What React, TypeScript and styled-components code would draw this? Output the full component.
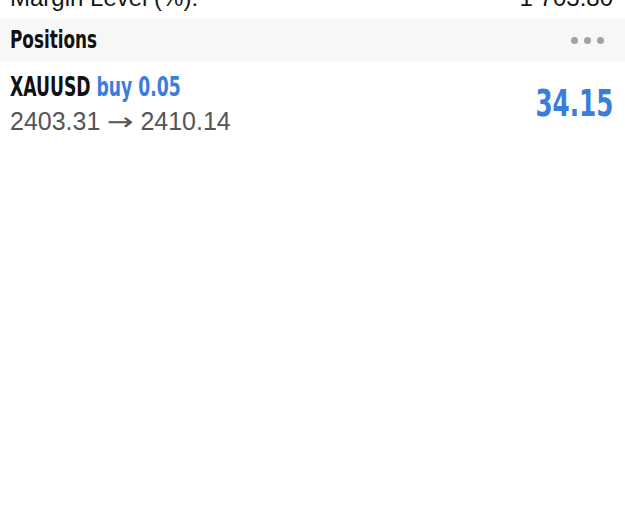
import React from "react";
import styled, { createGlobalStyle } from "styled-components";

const GlobalStyle = createGlobalStyle`
  html, body {
    margin: 0;
    padding: 0;
    background: #ffffff;
  }
  body {
    font-family: "Liberation Sans", Arial, sans-serif;
    color: #111111;
  }
`;

const Page = styled.div`
  width: 625px;
  min-height: 509px;
  background: #ffffff;
`;

const SummaryRow = styled.div`
  height: 19px;
  overflow: hidden;
  display: flex;
  justify-content: space-between;
  padding: 0 12px 0 10px;
  font-size: 24px;
  line-height: 24px;
  color: #151515;

  span {
    margin-top: -14px;
  }
`;

const SectionHeader = styled.div`
  height: 42px;
  background: #f7f7f7;
  display: flex;
  align-items: center;
  justify-content: space-between;
  padding: 0 21px 0 10px;
`;

/* condensed bold face, squeezed horizontally like the iOS condensed font */
const Condensed = styled.span`
  display: inline-block;
  font-family: "DejaVu Sans Condensed", "DejaVu Sans", sans-serif;
  font-weight: 700;
  transform: scaleX(0.76);
  transform-origin: left center;
  white-space: nowrap;
`;

const SectionTitle = styled(Condensed)`
  font-size: 24px;
  line-height: 28px;
  color: #111111;
  transform: scaleX(0.78);
`;

const MoreDots = styled.div`
  display: flex;
  gap: 6px;

  span {
    width: 7px;
    height: 7px;
    border-radius: 50%;
    background: #a2a2a2;
  }
`;

const PositionRow = styled.div`
  height: 86px;
  display: flex;
  align-items: center;
  justify-content: space-between;
  padding: 0 12px 0 10px;
`;

const PositionInfo = styled.div`
  display: flex;
  flex-direction: column;
  gap: 6px;
`;

const Symbol = styled(Condensed)`
  font-size: 26px;
  line-height: 28px;
  color: #111111;
  transform: scaleX(0.735);
`;

const Side = styled.span`
  color: #3b7ddb;
`;

const Prices = styled.div`
  font-size: 25px;
  line-height: 28px;
  color: #555555;
  white-space: nowrap;
`;

const Arrow = styled.span`
  display: inline-block;
  margin: 0 3px;
  font-family: "DejaVu Sans", sans-serif;
  font-size: 24px;
  transform: scaleX(1.33);
`;

const Profit = styled(Condensed)<{ $positive: boolean }>`
  font-size: 37px;
  line-height: 40px;
  transform: scaleX(0.74);
  transform-origin: right center;
  color: ${(p) => (p.$positive ? "#3b7ddb" : "#d64541")};
`;

export default function App() {
  return (
    <Page>
      <GlobalStyle />
      <SummaryRow>
        <span>Margin Level (%):</span>
        <span>1 703.80</span>
      </SummaryRow>
      <SectionHeader>
        <SectionTitle>Positions</SectionTitle>
        <MoreDots>
          <span />
          <span />
          <span />
        </MoreDots>
      </SectionHeader>
      <PositionRow>
        <PositionInfo>
          <div>
            <Symbol>
              XAUUSD <Side>buy 0.05</Side>
            </Symbol>
          </div>
          <Prices>
            2403.31 <Arrow>→</Arrow> 2410.14
          </Prices>
        </PositionInfo>
        <Profit $positive>34.15</Profit>
      </PositionRow>
    </Page>
  );
}
